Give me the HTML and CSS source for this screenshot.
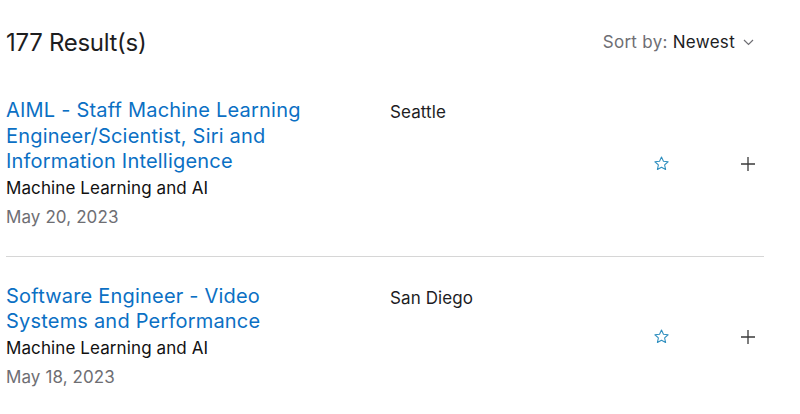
FILE: index.html
```html
<!DOCTYPE html>
<html>
<head>
<meta charset="utf-8">
<link rel="stylesheet" href="styles.css">
</head>
<body>
<div class="page">
  <div class="header">
    <h2 class="count">177 Result(s)</h2>
    <div class="sort"><span class="sort-label">Sort by:</span> <span class="sort-value">Newest</span>
      <svg class="chev" width="11" height="7" viewBox="0 0 11 7"><path d="M1 1l4.5 4.5L10 1" fill="none" stroke="#6e6e73" stroke-width="1.2"/></svg>
    </div>
  </div>
  <div class="list">
    <div class="job">
      <div class="main">
        <a class="title">AIML - Staff Machine Learning Engineer/Scientist, Siri and Information Intelligence</a>
        <div class="team">Machine Learning and AI</div>
        <div class="date">May 20, 2023</div>
      </div>
      <div class="loc">Seattle</div>
      <div class="actions">
        <span class="star"><svg width="17" height="17" viewBox="0 0 24 24"><path d="M12 2.8l2.75 6.05 6.6.7-4.95 4.45 1.4 6.5L12 17.2 6.2 20.5l1.4-6.5L2.65 9.55l6.6-.7z" fill="none" stroke="#2f8fbf" stroke-width="1.5" stroke-linejoin="round"/></svg></span>
        <span class="plus"><svg width="14" height="14" viewBox="0 0 14 14"><path d="M7 0v14M0 7h14" stroke="#3a3a3a" stroke-width="1.3"/></svg></span>
      </div>
    </div>
    <div class="job">
      <div class="main">
        <a class="title">Software Engineer - Video Systems and Performance</a>
        <div class="team">Machine Learning and AI</div>
        <div class="date">May 18, 2023</div>
      </div>
      <div class="loc">San Diego</div>
      <div class="actions">
        <span class="star"><svg width="17" height="17" viewBox="0 0 24 24"><path d="M12 2.8l2.75 6.05 6.6.7-4.95 4.45 1.4 6.5L12 17.2 6.2 20.5l1.4-6.5L2.65 9.55l6.6-.7z" fill="none" stroke="#2f8fbf" stroke-width="1.5" stroke-linejoin="round"/></svg></span>
        <span class="plus"><svg width="14" height="14" viewBox="0 0 14 14"><path d="M7 0v14M0 7h14" stroke="#3a3a3a" stroke-width="1.3"/></svg></span>
      </div>
    </div>
  </div>
</div>
</body>
</html>
```
FILE: styles.css
```css
* { box-sizing: border-box; }
body {
  margin: 0;
  background: #fff;
  font-family: Inter, "Noto Sans", sans-serif;
  color: #1d1d1f;
}
.page {
  padding: 24px 36px 0 6px;
}
.header {
  display: flex;
  justify-content: space-between;
  align-items: center;
  height: 36px;
}
.count {
  margin: 0;
  font-size: 24px;
  font-weight: 400;
  letter-spacing: -0.3px;
  line-height: 36px;
  position: relative;
  top: 1px;
}
.sort {
  display: flex;
  align-items: center;
  gap: 5px;
  font-size: 17px;
  letter-spacing: 0.3px;
  padding-right: 10px;
}
.sort-label { color: #6e6e73; }
.sort-value { color: #1d1d1f; }
.chev { margin-left: 3px; }
.list {
  margin-top: 11px;
}
.job {
  display: flex;
  align-items: center;
  padding: 27px 0 26px;
  border-bottom: 1px solid #d6d6d6;
}
.job:last-child { border-bottom: none; }
.main {
  flex: 0 0 384px;
  align-self: flex-start;
}
.title {
  display: block;
  color: #0b70c4;
  font-size: 20px;
  line-height: 25.5px;
  letter-spacing: 0.2px;
  text-decoration: none;
  padding-right: 60px;
}
.team {
  font-size: 17px;
  line-height: 26px;
  margin-top: 0;
  letter-spacing: 0.1px;
  color: #111;
}
.date {
  font-size: 17px;
  line-height: 26px;
  margin-top: 3px;
  letter-spacing: 0.1px;
  color: #6e6e73;
}
.loc {
  flex: 1;
  align-self: flex-start;
  font-size: 17px;
  line-height: 25px;
  margin-top: 2px;
  letter-spacing: 0.1px;
  color: #1d1d1f;
}
.actions {
  display: flex;
  align-items: center;
  gap: 51px;
}
.star, .plus {
  display: flex;
  align-items: center;
  justify-content: center;
}
.star { width: 40px; }
.plus { width: 32px; }
```
